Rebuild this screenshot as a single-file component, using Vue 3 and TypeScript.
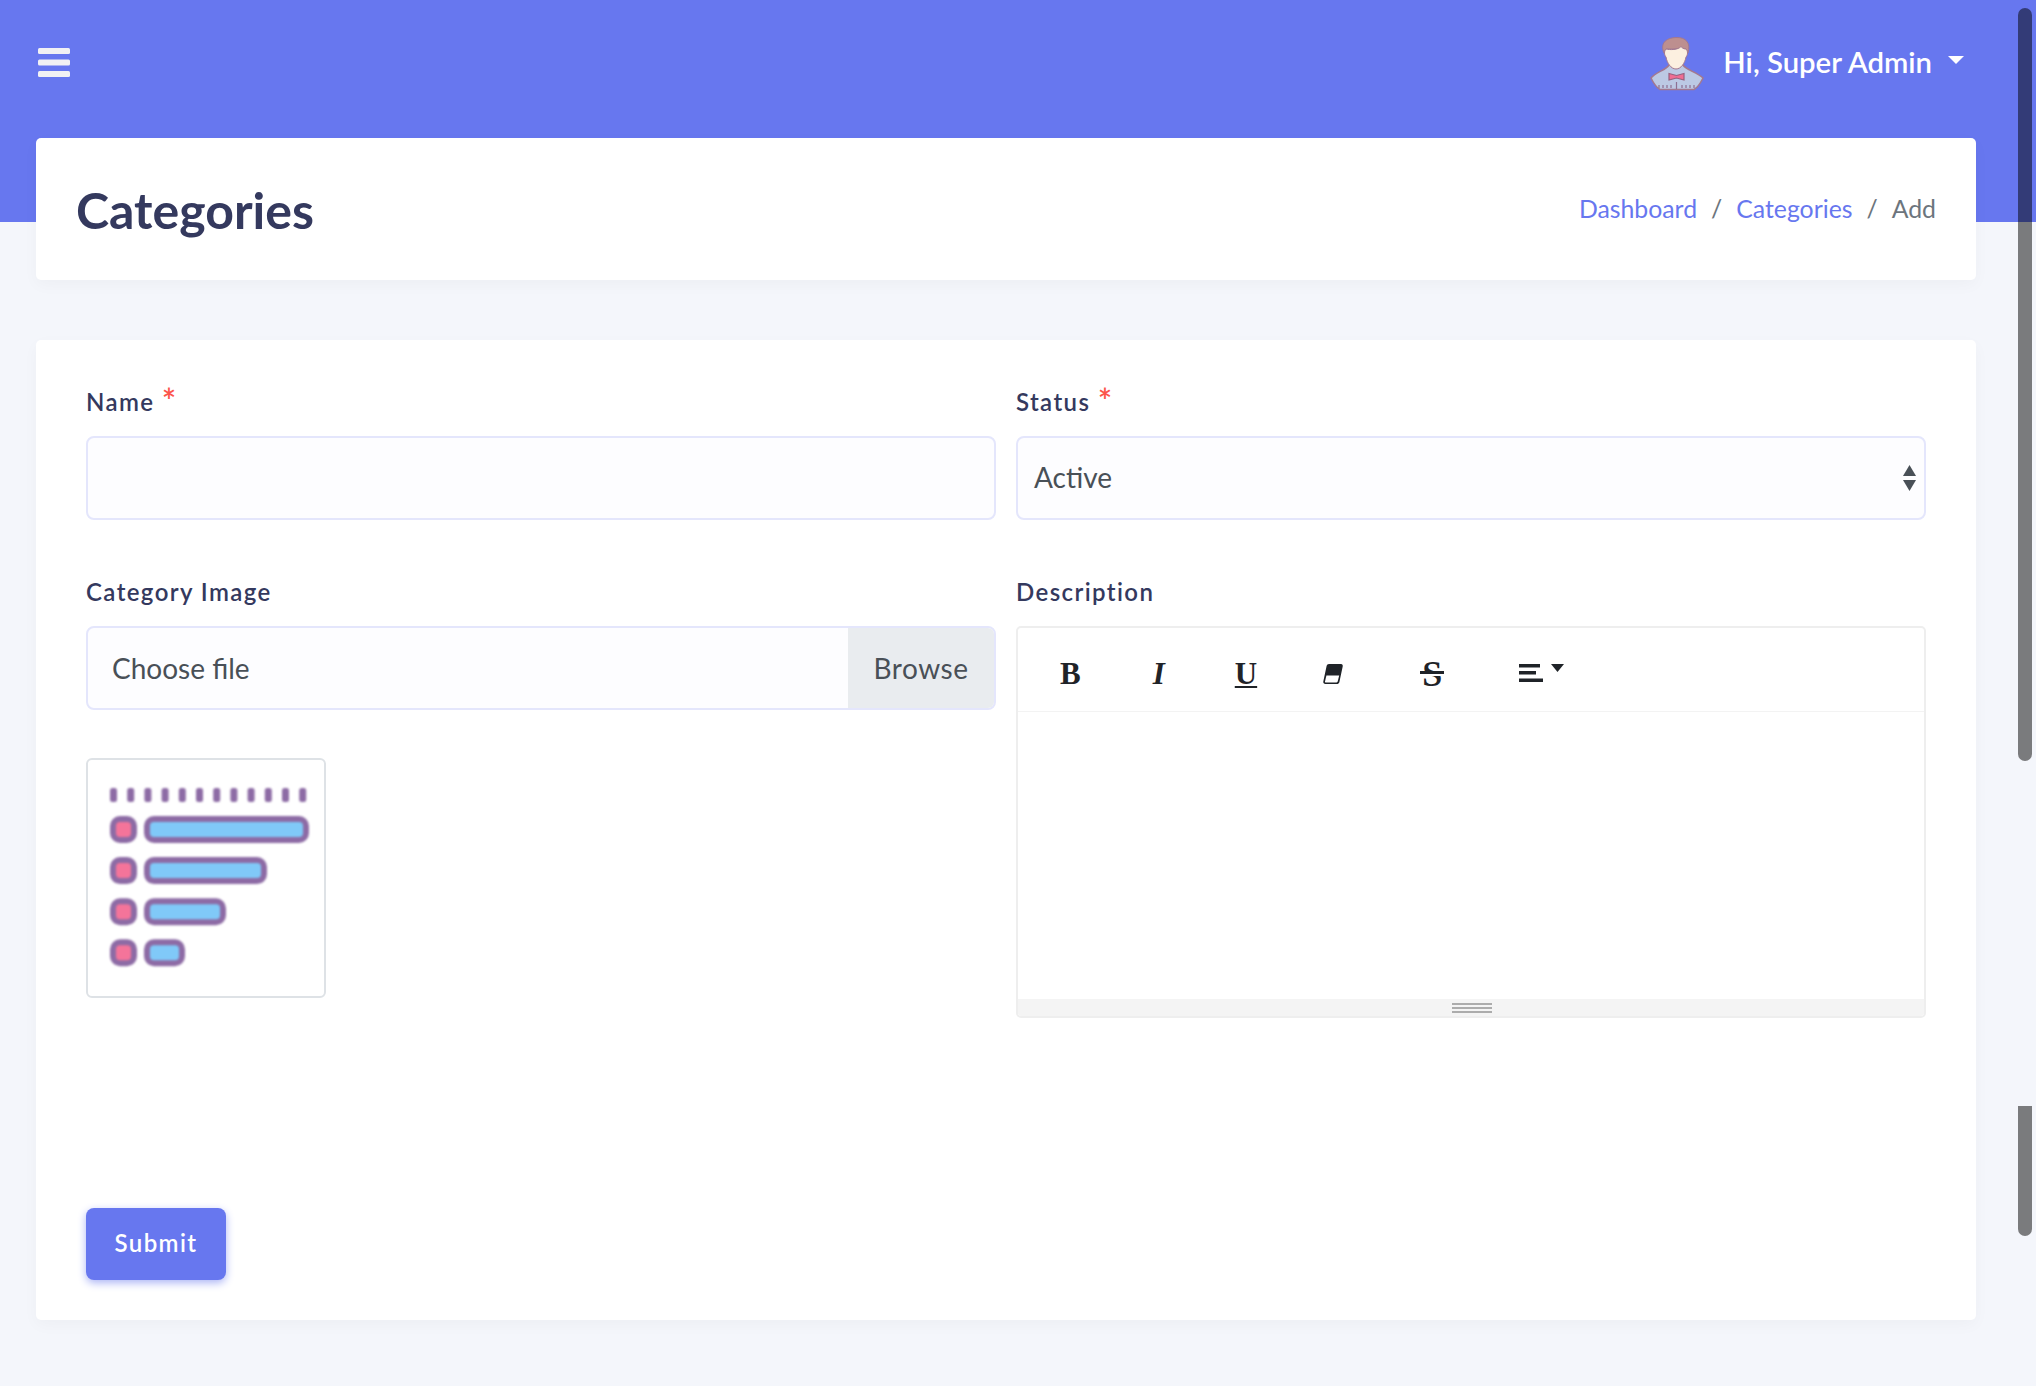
<script setup lang="ts">
const dashes = Array.from({ length: 12 }, (_, i) => 110 + i * 17.2)
const bars = [165, 123, 82, 41]
</script>

<template>
  <div class="main-wrapper">
    <nav class="navbar">
      <svg class="menu-icon" viewBox="0 0 32 29" aria-label="menu">
        <rect x="0" y="0" width="32" height="6" rx="1.5" />
        <rect x="0" y="11.5" width="32" height="6" rx="1.5" />
        <rect x="0" y="23" width="32" height="6" rx="1.5" />
      </svg>
      <div class="user">
        <svg class="avatar" viewBox="0 0 54 56">
          <path d="M1 42C6 36 16 34 19 29L33 29C36 34 47 36 53 42C50 48 47 52 44 53.500L10 53.500C7 52 4 48 1 42Z" fill="#bcc9e4" stroke="#a3788f" stroke-width="1.5" />
          <path d="M14 17C10 8 15 2 26 1.500C36 1 41 7 38 17L36 13L16 13Z" fill="#bd8f8f" stroke="#a3788f" stroke-width="1" />
          <path d="M16 13C20 14 28 14 31 10.500C33 13 35 13 36 13C38 15 38 19 36 21C35 27 31 33 26 33C21 33 17 27 16 21C14 19 14 15 16 13Z" fill="#fcf0e0" stroke="#a3788f" stroke-width="1" />
          <path d="M19 37.500L26.500 39.500L34 37.500L34 44L26.500 42L19 44Z" fill="#ef6d93" stroke="#97607f" stroke-width="1.2" />
          <path d="M9 49v3M13 49v3M17 49v3M21 49v3M26.500 46v7M32 49v3M36 49v3M40 49v3M44 49v3" stroke="#8e6f92" stroke-width="1.2" />
        </svg>
        <span class="user-name">Hi, Super Admin</span>
        <span class="caret"></span>
      </div>
    </nav>

    <section class="section-header">
      <h1>Categories</h1>
      <div class="breadcrumb">
        <a>Dashboard</a>
        <span class="sep">/</span>
        <a>Categories</a>
        <span class="sep">/</span>
        <span>Add</span>
      </div>
    </section>

    <section class="card">
      <div class="form-grid">
        <div class="form-group">
          <label>Name <span class="req">*</span></label>
          <div class="control"></div>
        </div>
        <div class="form-group">
          <label>Status <span class="req">*</span></label>
          <div class="control select">
            <span>Active</span>
            <svg class="select-arrows" viewBox="0 0 13 26">
              <path d="M6.500 0 13 11H0Z" />
              <path d="M0 15H13L6.500 26Z" />
            </svg>
          </div>
        </div>
        <div class="form-group">
          <label>Category Image</label>
          <div class="file-input">
            <span class="file-name">Choose file</span>
            <span class="file-btn">Browse</span>
          </div>
          <div class="thumb">
            <svg viewBox="88 760 236 236" class="thumb-img">
              <g class="blur">
                <rect v-for="x in dashes" :key="x" :x="x" y="788" width="7" height="14" rx="2.500" fill="#8d6ba5" />
                <g v-for="(w, i) in bars" :key="w">
                  <rect x="113" :y="819 + i * 41.1" width="21" height="21" rx="7" fill="#f4749a" stroke="#8d6ba5" stroke-width="6" />
                  <rect x="147" :y="819 + i * 41.1" :width="w - 6" height="21" rx="7" fill="#80c9f8" stroke="#8d6ba5" stroke-width="6" />
                </g>
              </g>
            </svg>
          </div>
        </div>
        <div class="form-group">
          <label>Description</label>
          <div class="editor">
            <div class="toolbar">
              <span class="tool tool-b">B</span>
              <span class="tool tool-i">I</span>
              <span class="tool tool-u">U</span>
              <svg class="tool-eraser" viewBox="0 0 20 22">
                <path d="M6 1H18C19.400 1 20 2 19.700 3.400L16.400 19C16 20.400 15 21 13.800 21H2.400C1 21 0 20 .3 18.600L3.600 3C3.900 1.800 4.700 1 6 1Z" fill="#1f2328" />
                <path d="M3.400 12.500H16.200L14.700 18.600C14.600 19 14.200 19.400 13.600 19.400H2.800C2.200 19.400 1.900 19 2 18.400Z" fill="#fff" />
              </svg>
              <span class="tool tool-s">S<i></i></span>
              <svg class="tool-align" viewBox="0 0 45 18">
                <path d="M0 0H21V3.500H0ZM0 7H17V10.500H0ZM0 14.500H24V18H0Z" fill="#1f2328" />
                <path d="M32 0H45L38.500 8Z" fill="#1f2328" />
              </svg>
            </div>
            <div class="editor-body"></div>
            <div class="statusbar"><span class="grip"></span></div>
          </div>
        </div>
      </div>
      <button class="btn-submit" type="button">Submit</button>
    </section>

    <div class="scroll-thumb thumb-main"></div>
    <div class="scroll-thumb thumb-inner"></div>
  </div>
</template>

<style>
html, body {
  margin: 0;
  overflow: hidden;
}
</style>

<style scoped>
.main-wrapper {
  position: relative;
  box-sizing: border-box;
  height: 1386px;
  padding: 0 60px 0 36px;
  background: linear-gradient(#6777ef 222px, #f4f6fb 222px);
  font-family: Lato, "Noto Sans", sans-serif;
  color: #34395e;
  overflow: hidden;
}

.navbar {
  display: flex;
  align-items: center;
  justify-content: space-between;
  height: 138px;
  padding-right: 12px;
  box-sizing: border-box;
}

.menu-icon {
  width: 32px;
  height: 29px;
  margin: -14px 0 0 2px;
  fill: #f1f1f4;
}

.user {
  display: flex;
  align-items: center;
  margin-top: -14px;
  color: #fff;
}

.avatar {
  width: 54px;
  height: 56px;
  margin-top: 4px;
}

.user-name {
  margin: -2px 0 0 19px;
  font-size: 29.3px;
  font-weight: 600;
}

.caret {
  width: 0;
  height: 0;
  margin: -5px 0 0 16px;
  border-top: 8px solid #fff;
  border-left: 8px solid transparent;
  border-right: 8px solid transparent;
}

.section-header {
  display: flex;
  align-items: center;
  justify-content: space-between;
  height: 142px;
  padding: 0 40px;
  background: #fff;
  border-radius: 5px;
  box-shadow: 0 5px 16px rgba(0, 0, 0, 0.03);
  box-sizing: border-box;
}

.section-header h1 {
  margin: 2px 0 0;
  font-size: 50px;
  font-weight: 700;
  color: #34395e;
}

.breadcrumb {
  display: flex;
  gap: 14px;
  margin-top: -2px;
  font-size: 24.8px;
  color: #6c757d;
}

.breadcrumb a {
  color: #6777ef;
}

.card {
  margin-top: 60px;
  padding: 45px 50px 40px;
  background: #fff;
  border-radius: 5px;
  box-shadow: 0 5px 16px rgba(0, 0, 0, 0.03);
}

.form-grid {
  display: grid;
  grid-template-columns: 910px 910px;
  column-gap: 20px;
  row-gap: 55px;
}

label {
  display: block;
  margin-bottom: 17px;
  font-size: 24px;
  font-weight: 600;
  line-height: 34px;
  letter-spacing: 1.4px;
  color: #34395e;
}

.req {
  position: relative;
  top: 3px;
  margin-left: 0;
  font-size: 34px;
  line-height: 0;
  color: #fc544b;
}

.control {
  display: flex;
  align-items: center;
  box-sizing: border-box;
  height: 84px;
  padding: 0 16px 2px;
  background: #fdfdff;
  border: 2px solid #e4e6fc;
  border-radius: 8px;
  font-size: 28px;
  color: #495057;
}

.select {
  justify-content: space-between;
}

.select-arrows {
  width: 13px;
  height: 26px;
  margin: 2px -8px 0 0;
  fill: #495057;
}

.file-input {
  display: flex;
  align-items: stretch;
  box-sizing: border-box;
  height: 84px;
  background: #fdfdff;
  border: 2px solid #e4e6fc;
  border-radius: 8px;
  overflow: hidden;
  font-size: 28px;
  color: #495057;
}

.file-name {
  flex: 1;
  display: flex;
  align-items: center;
  padding-left: 24px;
}

.file-btn {
  display: flex;
  align-items: center;
  justify-content: center;
  width: 146px;
  letter-spacing: 0.5px;
  background: #e9ecef;
}

.thumb {
  box-sizing: border-box;
  width: 240px;
  height: 240px;
  margin-top: 48px;
  background: #fff;
  border: 2px solid #dee2e6;
  border-radius: 6px;
  overflow: hidden;
}

.thumb-img {
  display: block;
  width: 236px;
  height: 236px;
}

.blur {
  filter: blur(1px);
}

.editor {
  display: flex;
  flex-direction: column;
  box-sizing: border-box;
  height: 392px;
  border: 2px solid #eeeeee;
  border-radius: 5px;
  overflow: hidden;
}

.toolbar {
  display: flex;
  align-items: center;
  box-sizing: border-box;
  height: 84px;
  padding: 8px 0 0 42px;
  border-bottom: 1px solid #f3f3f3;
  color: #1f2328;
}

.tool {
  display: block;
  font-family: "Liberation Serif", serif;
  font-size: 31px;
  font-weight: 700;
  line-height: 1;
}

.tool-i {
  margin-left: 72px;
  font-style: italic;
}

.tool-u {
  margin-left: 70px;
  text-decoration: underline;
  text-decoration-thickness: 2px;
  text-underline-offset: 2px;
}

.tool-eraser {
  width: 20px;
  height: 22px;
  margin-left: 66px;
}

.tool-s {
  position: relative;
  margin-left: 79px;
  font-size: 36px;
}

.tool-s i {
  position: absolute;
  left: -2px;
  right: -2px;
  top: 15px;
  height: 3px;
  background: #1f2328;
  box-shadow: 0 2px 0 #fff;
}

.tool-align {
  width: 45px;
  height: 18px;
  margin: -1px 0 0 77px;
}

.editor-body {
  flex: 1;
}

.statusbar {
  display: flex;
  justify-content: center;
  align-items: center;
  height: 17px;
  padding-left: 2px;
  background: #f4f4f4;
}

.grip {
  display: block;
  width: 40px;
  height: 10px;
  background: repeating-linear-gradient(#acacac 0 2px, transparent 2px 4px);
}

.btn-submit {
  display: block;
  width: 140px;
  height: 72px;
  margin-top: 190px;
  padding: 0 0 3px;
  background: #6777ef;
  border: 0;
  border-radius: 8px;
  box-shadow: 0 3px 9px #acb5f6;
  font-family: inherit;
  font-size: 24px;
  font-weight: 600;
  letter-spacing: 1.4px;
  color: #fff;
}

.scroll-thumb {
  position: absolute;
  left: 2018px;
  width: 14px;
  background: rgba(0, 0, 0, 0.5);
}

.thumb-main {
  top: 8px;
  height: 753px;
  border-radius: 7px;
}

.thumb-inner {
  top: 1106px;
  height: 130px;
  border-radius: 0 0 7px 7px;
}
</style>
